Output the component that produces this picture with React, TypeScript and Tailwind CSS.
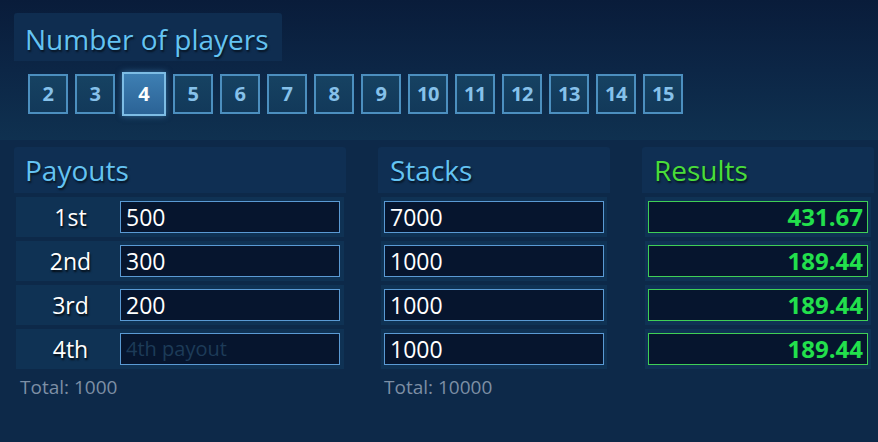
import React from "react";

const players = [2, 3, 4, 5, 6, 7, 8, 9, 10, 11, 12, 13, 14, 15];
const payouts = [
  { label: "1st", value: "500" },
  { label: "2nd", value: "300" },
  { label: "3rd", value: "200" },
  { label: "4th", value: "" },
];
const stacks = ["7000", "1000", "1000", "1000"];
const results = ["431.67", "189.44", "189.44", "189.44"];

const font = { fontFamily: '"Open Sans", "Noto Sans", sans-serif' };

export default function App() {
  return (
    <div
      className="w-[878px] h-[442px] overflow-hidden bg-[#0d2949] text-white relative"
      style={font}
    >
      {/* top section */}
      <div className="h-[140px] pt-[13px] pl-[14px] bg-gradient-to-b from-[#091c3a] via-[#0c2646] to-[#0f3150]">
        <div className="w-[268px] h-[48px] rounded-t-[3px] bg-[#0f2d50] pl-[11px] flex items-center">
          <span className="text-[28px] leading-none text-[#64c3f2] [text-shadow:1px_2px_2px_rgba(0,0,0,0.6)] mt-[4px]">
            Number of players
          </span>
        </div>
        <div className="flex items-center gap-[7px] pl-[14px] h-[46px] mt-[10px]">
          {players.map((p) =>
            p === 4 ? (
              <div
                key={p}
                className="w-[44px] h-[44px] flex items-center justify-center border-2 border-[#7dbce4] bg-gradient-to-b from-[#3e7fb3] to-[#2b6396] text-white font-bold text-[20px] shadow-[0_0_6px_rgba(90,170,230,0.5)]"
              >
                {p}
              </div>
            ) : (
              <div
                key={p}
                className="w-[40px] h-[40px] flex items-center justify-center border-2 border-[#4c8fbf] bg-gradient-to-b from-[#164262] to-[#12395a] text-[#86c1ea] font-bold text-[20px] tracking-[-0.5px]"
              >
                {p}
              </div>
            )
          )}
        </div>
      </div>

      {/* panels */}
      <div className="flex pl-[14px] pt-[7px] gap-[32px]">
        {/* payouts */}
        <div className="w-[332px]">
          <div className="h-[46px] rounded-t-[3px] bg-[#0f2f53] pl-[11px] flex items-center">
            <span className="text-[28px] leading-none text-[#64c3f2] [text-shadow:1px_2px_2px_rgba(0,0,0,0.6)]">
              Payouts
            </span>
          </div>
          <div className="flex flex-col gap-[4px] mt-[4px] px-[2px]">
            {payouts.map((r) => (
              <div
                key={r.label}
                className="h-[40px] bg-[#0f3254] flex items-start pt-[4px] pr-[3px]"
              >
                <div className="w-[104px] pl-[5px] h-[32px] flex items-center justify-center text-[23px] text-white [text-shadow:1px_2px_2px_rgba(0,0,0,0.8)]">
                  {r.label}
                </div>
                <div className="w-[220px] h-[32px] border border-[#5a9ad4] bg-[#06152e] flex items-center pl-[5px] text-[23px]">
                  {r.value ? (
                    <span className="text-white">{r.value}</span>
                  ) : (
                    <span className="text-[#1d3b58] text-[20px]">4th payout</span>
                  )}
                </div>
              </div>
            ))}
          </div>
          <div className="pl-[6px] mt-[4px] text-[19px] text-[#7d8fa5]">Total: 1000</div>
        </div>

        {/* stacks */}
        <div className="w-[232px]">
          <div className="h-[46px] rounded-t-[3px] bg-[#0f2f53] pl-[12px] flex items-center">
            <span className="text-[28px] leading-none text-[#64c3f2] [text-shadow:1px_2px_2px_rgba(0,0,0,0.6)]">
              Stacks
            </span>
          </div>
          <div className="flex flex-col gap-[4px] mt-[4px] px-[3px]">
            {stacks.map((s, i) => (
              <div key={i} className="h-[40px] bg-[#0f3254] pt-[4px] px-[3px]">
                <div className="w-[220px] h-[32px] border border-[#5a9ad4] bg-[#06152e] flex items-center pl-[5px] text-[23px] text-white">
                  {s}
                </div>
              </div>
            ))}
          </div>
          <div className="pl-[6px] mt-[4px] text-[19px] text-[#7d8fa5]">Total: 10000</div>
        </div>

        {/* results */}
        <div className="w-[232px]">
          <div className="h-[46px] rounded-t-[3px] bg-[#0f2f53] pl-[12px] flex items-center">
            <span className="text-[28px] leading-none text-[#49dd3a] [text-shadow:1px_2px_2px_rgba(0,0,0,0.6)]">
              Results
            </span>
          </div>
          <div className="flex flex-col gap-[4px] mt-[4px] px-[3px]">
            {results.map((s, i) => (
              <div key={i} className="h-[40px] bg-[#0f3254] pt-[4px] px-[3px]">
                <div className="w-[220px] h-[32px] border border-[#3fcf56] bg-[#06152e] flex items-center justify-end pr-[4px] text-[24px] font-bold text-[#22e04c]">
                  {s}
                </div>
              </div>
            ))}
          </div>
        </div>
      </div>
    </div>
  );
}
